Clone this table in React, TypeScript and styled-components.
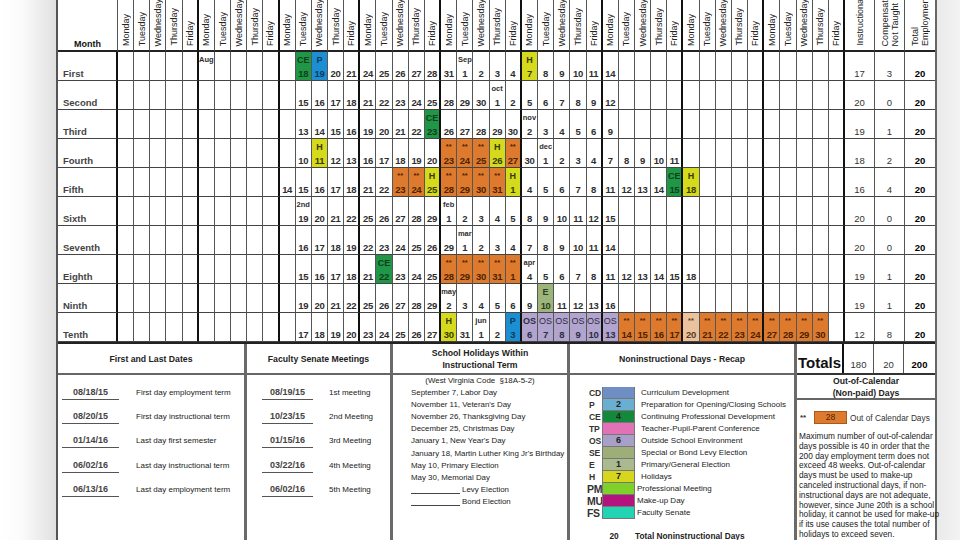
import React from 'react'
import styled, { createGlobalStyle } from 'styled-components'

const GlobalStyle = createGlobalStyle`
  html, body {
    margin: 0;
    padding: 0;
  }
  body {
    width: 960px;
    height: 540px;
    overflow: hidden;
    font-family: "Liberation Sans", Arial, sans-serif;
    background: #ececec;
  }
`

const KINDS = {
  ce: { bg: '#1f9747', fg: '#0e3f1c', tag: 'CE' },
  p: { bg: '#1c8fd3', fg: '#0c3a5c', tag: 'P' },
  h: { bg: '#d5db1c', fg: '#3a3a06', tag: 'H' },
  o: { bg: '#de7a2e', fg: '#4d2200', tag: '**' },
  l: { bg: '#ebc29e', fg: '#5a3a20', tag: '**' },
  os: { bg: '#b1a5cf', fg: '#2f2b40', tag: 'OS' },
  e: { bg: '#9db57b', fg: '#2f3d1c', tag: 'E' },
}

type Kind = keyof typeof KINDS
type Day = { n: string; kind?: Kind; mon?: string; strongTag?: boolean }

type MonthRow = {
  name: string
  start: number
  days: string[]
  totals: [string, string, string]
  extra?: Record<number, string>
}

const WEEKDAYS = ['Monday', 'Tuesday', 'Wednesday', 'Thursday', 'Friday']

const ROWS: MonthRow[] = [
  {
    name: 'First', start: 11, totals: ['17', '3', '20'], extra: { 5: 'Aug' },
    days: ['ce:18', 'p:19', '20', '21', '24', '25', '26', '27', '28', '31', 'Sep/1', '2', '3', '4', 'h:7', '8', '9', '10', '11', '14'],
  },
  {
    name: 'Second', start: 11, totals: ['20', '0', '20'],
    days: ['15', '16', '17', '18', '21', '22', '23', '24', '25', '28', '29', '30', 'oct/1', '2', '5', '6', '7', '8', '9', '12'],
  },
  {
    name: 'Third', start: 11, totals: ['19', '1', '20'],
    days: ['13', '14', '15', '16', '19', '20', '21', '22', 'ce:23', '26', '27', '28', '29', '30', 'nov/2', '3', '4', '5', '6', '9'],
  },
  {
    name: 'Fourth', start: 11, totals: ['18', '2', '20'],
    days: ['10', 'h:11', '12', '13', '16', '17', '18', '19', '20', 'o:23', 'o:24', 'o:25', 'h:26', 'o:27', '30', 'dec/1', '2', '3', '4', '7', '8', '9', '10', '11'],
  },
  {
    name: 'Fifth', start: 10, totals: ['16', '4', '20'],
    days: ['14', '15', '16', '17', '18', '21', '22', 'o:23', 'o:24', 'h:25', 'o:28', 'o:29', 'o:30', 'o:31', 'h:1', '4', '5', '6', '7', '8', '11', '12', '13', '14', 'ce:15', 'h:18'],
  },
  {
    name: 'Sixth', start: 11, totals: ['20', '0', '20'],
    days: ['2nd/19', '20', '21', '22', '25', '26', '27', '28', '29', 'feb/1', '2', '3', '4', '5', '8', '9', '10', '11', '12', '15'],
  },
  {
    name: 'Seventh', start: 11, totals: ['20', '0', '20'],
    days: ['16', '17', '18', '19', '22', '23', '24', '25', '26', '29', 'mar/1', '2', '3', '4', '7', '8', '9', '10', '11', '14'],
  },
  {
    name: 'Eighth', start: 11, totals: ['19', '1', '20'],
    days: ['15', '16', '17', '18', '21', 'ce:22', '23', '24', '25', 'o:28', 'o:29', 'o:30', 'o:31', 'o:1', 'apr/4', '5', '6', '7', '8', '11', '12', '13', '14', '15', '18'],
  },
  {
    name: 'Ninth', start: 11, totals: ['19', '1', '20'],
    days: ['19', '20', '21', '22', '25', '26', '27', '28', '29', 'may/2', '3', '4', '5', '6', '9', 'e:10', '11', '12', '13', '16'],
  },
  {
    name: 'Tenth', start: 11, totals: ['12', '8', '20'],
    days: ['17', '18', '19', '20', '23', '24', '25', '26', '27', 'h:30', '31', 'jun/1', '2', 'p:3', 'OS:6', 'os:7', 'os:8', 'os:9', 'os:10', 'os:13', 'o:14', 'o:15', 'o:16', 'o:17', 'l:20', 'o:21', 'o:22', 'o:23', 'o:24', 'o:27', 'o:28', 'o:29', 'o:30'],
  },
]

const FIRST_LAST = [
  ['08/18/15', 'First day employment term'],
  ['08/20/15', 'First day instructional term'],
  ['01/14/16', 'Last day first semester'],
  ['06/02/16', 'Last day instructional term'],
  ['06/13/16', 'Last day employment term'],
]

const SENATE = [
  ['08/19/15', '1st meeting'],
  ['10/23/15', '2nd Meeting'],
  ['01/15/16', '3rd Meeting'],
  ['03/22/16', '4th Meeting'],
  ['06/02/16', '5th Meeting'],
]

const HOLIDAYS = [
  'September 7, Labor Day',
  "November 11, Veteran's Day",
  'November 26, Thanksgiving Day',
  'December 25, Christmas Day',
  "January 1, New Year's Day",
  "January 18, Martin Luther King Jr's Birthday",
  'May 10, Primary Election',
  'May 30, Memorial Day',
]

const LEGEND = [
  { code: 'CD', color: '#6e8ec4', count: '', label: 'Curriculum Development' },
  { code: 'P', color: '#6aaed2', count: '2', label: 'Preparation for Opening/Closing Schools' },
  { code: 'CE', color: '#13893c', count: '4', label: 'Continuing Professional Development' },
  { code: 'TP', color: '#e271b5', count: '', label: 'Teacher-Pupil-Parent Conference' },
  { code: 'OS', color: '#a9a0c9', count: '6', label: 'Outside School Environment' },
  { code: 'SE', color: '#9eae78', count: '', label: 'Special or Bond Levy Election' },
  { code: 'E', color: '#abb98f', count: '1', label: 'Primary/General Election' },
  { code: 'H', color: '#d6d61e', count: '7', label: 'Holidays' },
  { code: 'PM', color: '#7fd12a', count: '', label: 'Professional Meeting', big: true },
  { code: 'MU', color: '#b3127f', count: '', label: 'Make-up Day', big: true },
  { code: 'FS', color: '#22d3b4', count: '', label: 'Faculty Senate', big: true },
]

const NOTE = [
  'Maximum number of out-of-calendar',
  'days possible is 40 in order that the',
  '200 day employment term does not',
  'exceed 48 weeks. Out-of-calendar',
  'days must be used to make-up',
  'canceled instructional days, if non-',
  'instructional days are not adequate,',
  'however, since June 20th is a school',
  'holiday, it cannot be used for make-up',
  'if its use causes the total number of',
  'holidays to exceed seven.',
]

// "Sep/1" -> month label over the day, "ce:18" -> coloured day, "OS:6" -> bold tag
const parse = (t: string): Day => {
  if (t.includes('/')) {
    const [mon, n] = t.split('/')
    return { n, mon }
  }
  if (t.includes(':')) {
    const [k, n] = t.split(':')
    return { n, kind: k.toLowerCase() as Kind, strongTag: k !== k.toLowerCase() }
  }
  return { n: t }
}

const Page = styled.div`
  width: 960px;
  height: 540px;
  overflow: hidden;
  display: flex;
  box-sizing: border-box;
  padding-left: 56px;
  background: linear-gradient(90deg, #ffffff 0, #fbfbfb 22px, #e0e0e0 56px, #eaeaea 56px, #eaeaea 937px, #f3f3f3 960px);
`

const Sheet = styled.div`
  width: 881px;
  height: 540px;
  box-sizing: border-box;
  display: flex;
  flex-direction: column;
  background: #fff;
  border-left: 2px solid #555;
  border-right: 2px solid #666;
  color: #2a2a2a;
`

const Calendar = styled.div`
  display: grid;
  grid-template-columns: 60px repeat(45, minmax(0, 1fr)) 30px 30px 30px;
  grid-template-rows: 52px repeat(10, 29px);
`

const HeadCell = styled.div<{ $edge?: boolean; $last?: boolean }>`
  display: flex;
  align-items: flex-end;
  justify-content: center;
  box-sizing: border-box;
  overflow: hidden;
  padding-bottom: 4px;
  border-bottom: 2px solid #222;
  border-right: ${p => (p.$last ? 'none' : p.$edge ? '2px solid #111' : '1px solid #555')};
`

const MonthHead = styled(HeadCell)`
  font-size: 9px;
  font-weight: 700;
  color: #111;
  padding-bottom: 1px;
`

const Vertical = styled.span`
  writing-mode: vertical-rl;
  transform: rotate(180deg);
  font-size: 9px;
  line-height: 10px;
  color: #222;
  white-space: nowrap;
  text-align: left;
`

const MonthCell = styled.div`
  display: flex;
  align-items: flex-end;
  box-sizing: border-box;
  padding: 0 0 1px 5px;
  border-right: 2px solid #111;
  border-bottom: 1px solid #444;
  font-size: 9.5px;
  line-height: 11px;
  font-weight: 700;
  color: #444;
`

const DayCell = styled.div<{ $edge: boolean; $kind?: Kind }>`
  display: flex;
  flex-direction: column;
  align-items: center;
  justify-content: space-between;
  box-sizing: border-box;
  min-width: 0;
  padding: 3px 0 1px;
  border-right: ${p => (p.$edge ? '2px solid #111' : '1px solid #555')};
  border-bottom: 1px solid #444;
  background: ${p => (p.$kind ? KINDS[p.$kind].bg : '#fff')};
  color: ${p => (p.$kind ? KINDS[p.$kind].fg : '#2e2e2e')};
`

const Tag = styled.span<{ $small?: boolean; $light?: boolean }>`
  height: 10px;
  font-size: ${p => (p.$small ? '7.5px' : '9px')};
  line-height: 10px;
  font-weight: ${p => (p.$light ? 400 : 700)};
  white-space: nowrap;
`

const Num = styled.span`
  font-size: 9.5px;
  line-height: 11px;
  font-weight: 700;
  letter-spacing: -0.3px;
  white-space: nowrap;
`

const TotalCell = styled.div<{ $strong?: boolean; $last?: boolean }>`
  display: flex;
  align-items: flex-end;
  justify-content: center;
  box-sizing: border-box;
  padding-bottom: 1px;
  border-right: ${p => (p.$last ? 'none' : '1px solid #555')};
  border-bottom: 1px solid #444;
  font-size: 9.5px;
  line-height: 11px;
  font-weight: ${p => (p.$strong ? 700 : 400)};
  color: ${p => (p.$strong ? '#000' : '#333')};
`

const Bottom = styled.div`
  flex: 1;
  display: grid;
  grid-template-columns: 189px 146px 177px 227px 138px;
  grid-template-rows: 31px 1fr;
  border-top: 2px solid #222;
`

const PanelHead = styled.div`
  display: flex;
  align-items: center;
  justify-content: center;
  box-sizing: border-box;
  border-right: 3px solid #6a6a6a;
  border-bottom: 2px solid #666;
  font-size: 8.7px;
  line-height: 12px;
  font-weight: 700;
  color: #222;
  text-align: center;
`

const Panel = styled.div<{ $last?: boolean }>`
  box-sizing: border-box;
  border-right: ${p => (p.$last ? 'none' : '3px solid #6a6a6a')};
  min-width: 0;
`

const DateList = styled.div<{ $pad: number; $dateW: number; $gap: number }>`
  display: grid;
  grid-template-columns: ${p => p.$dateW}px 1fr;
  grid-auto-rows: 24.3px;
  column-gap: ${p => p.$gap}px;
  padding: 6px 0 0 ${p => p.$pad}px;
`

const DateValue = styled.span`
  align-self: center;
  text-align: center;
  font-size: 9px;
  line-height: 11px;
  font-weight: 700;
  color: #444;
  border-bottom: 1.5px solid #555;
  padding-bottom: 1px;
`

const DateLabel = styled.span`
  align-self: center;
  font-size: 8px;
  line-height: 11px;
  color: #222;
  white-space: nowrap;
  padding-bottom: 2px;
`

const HolidayBody = styled.div`
  display: flex;
  flex-direction: column;
  padding: 0 0 0 18px;
  font-size: 7.9px;
  color: #222;
  white-space: nowrap;
`

const HolidayLine = styled.div<{ $center?: boolean }>`
  display: flex;
  align-items: flex-end;
  height: 12.1px;
  line-height: 12.1px;
  margin-left: ${p => (p.$center ? '-18px' : '0')};
  justify-content: ${p => (p.$center ? 'center' : 'flex-start')};
`

const Blank = styled.span`
  width: 49px;
  height: 9px;
  margin: 0 2px 2px 0;
  border-bottom: 1px solid #444;
`

const Legend = styled.div`
  display: flex;
  flex-direction: column;
  padding: 12px 0 0 17px;
`

const LegendRow = styled.div`
  display: grid;
  grid-template-columns: 15px 33px 1fr;
  height: 12px;
  align-items: center;
  font-size: 8px;
  color: #222;
`

const Code = styled.span<{ $big?: boolean }>`
  font-size: ${p => (p.$big ? '10.5px' : '8.6px')};
  font-weight: 700;
  color: #333;
  padding-left: ${p => (p.$big ? '0' : '2px')};
  line-height: 12px;
  white-space: nowrap;
  letter-spacing: -0.3px;
`

const Swatch = styled.span<{ $color: string }>`
  height: 12px;
  box-sizing: border-box;
  background: ${p => p.$color};
  border: 1px solid #777;
  border-top-width: 0;
  text-align: center;
  font-size: 9px;
  font-weight: 700;
  line-height: 11px;
  color: #222;
`

const LegendLabel = styled.span<{ $big?: boolean }>`
  padding-left: ${p => (p.$big ? '2px' : '6px')};
  white-space: nowrap;
  line-height: 12px;
`

const TotalLine = styled.div`
  display: grid;
  grid-template-columns: 48px 1fr;
  margin: 12px 0 0 17px;
  font-size: 8.3px;
  font-weight: 700;
  color: #222;
`

const TotalNum = styled.span`
  text-align: center;
  padding-left: 6px;
`

const TotalsBar = styled.div`
  display: grid;
  grid-template-columns: 47px 30px 30px 31px;
  box-sizing: border-box;
  border-bottom: 2px solid #333;
`

const TotalsTitle = styled.div`
  display: flex;
  align-items: flex-end;
  justify-content: center;
  padding-bottom: 2px;
  border-right: 2px solid #111;
  font-size: 15px;
  font-weight: 700;
  color: #111;
`

const TotalsNum = styled.div<{ $strong?: boolean; $last?: boolean }>`
  display: flex;
  align-items: flex-end;
  justify-content: center;
  padding-bottom: 3px;
  border-right: ${p => (p.$last ? 'none' : '1px solid #555')};
  font-size: 9.5px;
  font-weight: ${p => (p.$strong ? 700 : 400)};
  color: ${p => (p.$strong ? '#000' : '#333')};
`

const OutHead = styled.div`
  height: 25px;
  box-sizing: border-box;
  border-bottom: 2px solid #666;
  text-align: center;
  font-size: 8.7px;
  line-height: 12px;
  font-weight: 700;
  color: #222;
`

const OutRow = styled.div`
  display: flex;
  align-items: center;
  gap: 3px;
  margin: 11px 0 0 3px;
  font-size: 8.3px;
  color: #333;
`

const Stars = styled.span`
  font-size: 8px;
  font-weight: 700;
  width: 11px;
`

const OrangeBox = styled.span`
  width: 33px;
  height: 13px;
  background: #de7a2e;
  border: 1px solid #a85a1c;
  box-sizing: border-box;
  text-align: center;
  font-size: 8.5px;
  line-height: 11px;
  color: #4d2200;
`

const Note = styled.div`
  margin: 8px 0 0 2px;
  font-size: 8.3px;
  line-height: 9.8px;
  color: #222;
  white-space: nowrap;
`

function CalendarGrid() {
  return (
    <Calendar>
      <MonthHead>Month</MonthHead>
      {Array.from({ length: 45 }, (_, c) => (
        <HeadCell key={`h${c}`} $edge={c % 5 === 4}>
          <Vertical>{WEEKDAYS[c % 5]}</Vertical>
        </HeadCell>
      ))}
      <HeadCell>
        <Vertical>Instructional Days</Vertical>
      </HeadCell>
      <HeadCell>
        <Vertical>
          Compensated
          <br />
          Not Taught Days
        </Vertical>
      </HeadCell>
      <HeadCell $last>
        <Vertical>
          Total
          <br />
          Employment Days
        </Vertical>
      </HeadCell>

      {ROWS.map(row => {
        const cells: (Day | null)[] = Array(45).fill(null)
        row.days.forEach((t, i) => {
          cells[row.start + i] = parse(t)
        })
        if (row.extra) {
          Object.entries(row.extra).forEach(([c, m]) => {
            cells[Number(c)] = { n: '', mon: m }
          })
        }
        return (
          <React.Fragment key={row.name}>
            <MonthCell>{row.name}</MonthCell>
            {cells.map((d, c) => {
              const tag = d?.mon ?? (d?.kind ? KINDS[d.kind].tag : '')
              const small = !!d?.mon || d?.kind === 'o' || d?.kind === 'l'
              const light = d?.kind === 'os' && !d.strongTag
              return (
                <DayCell key={c} $edge={c % 5 === 4} $kind={d?.kind}>
                  <Tag $small={small} $light={light}>{tag}</Tag>
                  <Num>{d?.n}</Num>
                </DayCell>
              )
            })}
            <TotalCell>{row.totals[0]}</TotalCell>
            <TotalCell>{row.totals[1]}</TotalCell>
            <TotalCell $strong $last>
              {row.totals[2]}
            </TotalCell>
          </React.Fragment>
        )
      })}
    </Calendar>
  )
}

export default function App() {
  return (
    <Page>
      <GlobalStyle />
      <Sheet>
        <CalendarGrid />
        <Bottom>
          <PanelHead>First and Last Dates</PanelHead>
          <PanelHead>Faculty Senate Meetings</PanelHead>
          <PanelHead>
            School Holidays Within
            <br />
            Instructional Term
          </PanelHead>
          <PanelHead>Noninstructional Days - Recap</PanelHead>
          <TotalsBar>
            <TotalsTitle>Totals</TotalsTitle>
            <TotalsNum>180</TotalsNum>
            <TotalsNum>20</TotalsNum>
            <TotalsNum $strong $last>
              200
            </TotalsNum>
          </TotalsBar>

          <Panel>
            <DateList $pad={4} $dateW={57} $gap={17}>
              {FIRST_LAST.map(([d, l]) => (
                <React.Fragment key={d + l}>
                  <DateValue>{d}</DateValue>
                  <DateLabel>{l}</DateLabel>
                </React.Fragment>
              ))}
            </DateList>
          </Panel>
          <Panel>
            <DateList $pad={15} $dateW={51} $gap={16}>
              {SENATE.map(([d, l]) => (
                <React.Fragment key={d + l}>
                  <DateValue>{d}</DateValue>
                  <DateLabel>{l}</DateLabel>
                </React.Fragment>
              ))}
            </DateList>
          </Panel>
          <Panel>
            <HolidayBody>
              <HolidayLine $center>(West Virginia Code &nbsp;§18A-5-2)</HolidayLine>
              {HOLIDAYS.map(h => (
                <HolidayLine key={h}>{h}</HolidayLine>
              ))}
              <HolidayLine>
                <Blank />
                Levy Election
              </HolidayLine>
              <HolidayLine>
                <Blank />
                Bond Election
              </HolidayLine>
            </HolidayBody>
          </Panel>
          <Panel>
            <Legend>
              {LEGEND.map(item => (
                <LegendRow key={item.code}>
                  <Code $big={item.big}>{item.code}</Code>
                  <Swatch $color={item.color}>{item.count}</Swatch>
                  <LegendLabel $big={item.big}>{item.label}</LegendLabel>
                </LegendRow>
              ))}
            </Legend>
            <TotalLine>
              <TotalNum>20</TotalNum>
              <span>Total Noninstructional Days</span>
            </TotalLine>
          </Panel>
          <Panel $last>
            <OutHead>
              Out-of-Calendar
              <br />
              (Non-paid) Days
            </OutHead>
            <OutRow>
              <Stars>**</Stars>
              <OrangeBox>28</OrangeBox>
              <span>Out of Calendar Days</span>
            </OutRow>
            <Note>
              {NOTE.map(line => (
                <div key={line}>{line}</div>
              ))}
            </Note>
          </Panel>
        </Bottom>
      </Sheet>
    </Page>
  )
}
